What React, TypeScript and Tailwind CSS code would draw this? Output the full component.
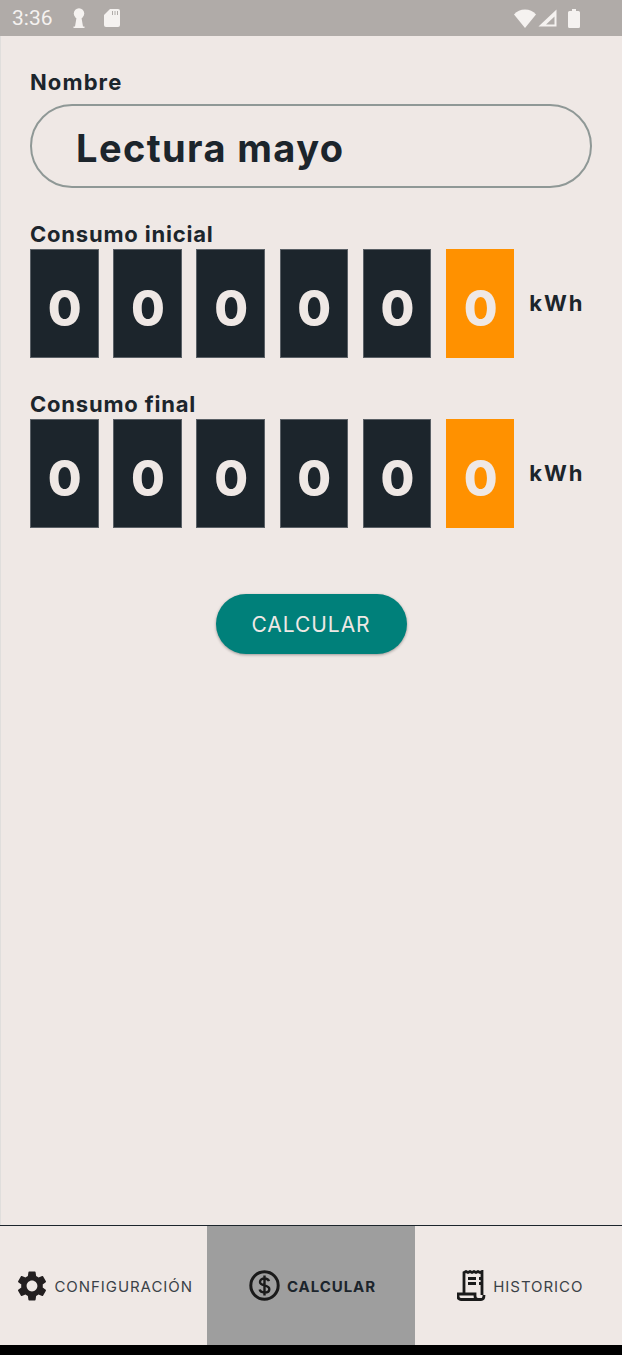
import { MdSettings } from 'react-icons/md'

const FONT = "font-['Inter','Liberation_Sans',sans-serif]"

function StatusBar() {
  return (
    <div className="h-9 bg-[#b0aba8] flex items-center pl-3 pr-[42px] text-[#f5f2f0]">
      <span className="font-['Roboto',sans-serif] text-[21px] leading-none w-[46px]">3:36</span>
      <svg className="ml-[14px]" width="14" height="20" viewBox="0 0 14 20" fill="#f5f2f0">
        <circle cx="7" cy="5.500" r="5.200" />
        <path d="M4.800 8h4.400l1.800 10.500h1.500V20H1.500v-1.500H3z" />
      </svg>
      <svg className="ml-[18px]" width="16" height="18" viewBox="0 0 16 18" fill="#f5f2f0">
        <path d="M6 0h8a2 2 0 0 1 2 2v14a2 2 0 0 1-2 2H2a2 2 0 0 1-2-2V6z" />
        <path d="M8 2h1v4H8zM10.500 2h1v4h-1zM13 2h1v4h-1z" fill="#b0aba8" />
      </svg>
      <div className="ml-auto flex items-center">
        <svg width="22" height="19" viewBox="0 0 22 19" fill="#f5f2f0">
          <path d="M0 5.500C3 2 6.500 0.500 11 0.500s8 1.500 11 5L11 19z" />
        </svg>
        <svg className="ml-[2px]" width="19" height="18" viewBox="0 0 19 18" fill="none">
          <path d="M0.500 17.500L18.500 0.500v17z" fill="#f5f2f0" />
          <path d="M8 15.500l8.500-8v8z" fill="#b0aba8" />
        </svg>
        <svg className="ml-[11px]" width="12" height="19" viewBox="0 0 12 19" fill="#f5f2f0">
          <path d="M4 0h4v2h2.500a1.500 1.500 0 0 1 1.500 1.500v14a1.500 1.500 0 0 1-1.500 1.500h-9A1.500 1.500 0 0 1 0 17.500v-14A1.500 1.500 0 0 1 1.500 2H4z" />
        </svg>
      </div>
    </div>
  )
}

function Meter({ label, className }: { label: string; className: string }) {
  return (
    <div className={className}>
      <div className="text-[22px] leading-[25px] pb-[2px] font-bold text-[#1c252c] tracking-[0.8px]">{label}</div>
      <div className="flex items-center gap-[14.700px]">
        {[0, 1, 2, 3, 4, 5].map(i => (
          <div
            key={i}
            className={`w-[68.500px] h-[109px] flex items-center justify-center ${
              i === 5 ? 'bg-[#ff9100]' : 'bg-[#1c252c] border-[0.5px] border-[#5a6066]'
            }`}>
            <span className="text-[49px] leading-none font-extrabold text-[#efe8e5] mt-[9px] ml-[1px]">0</span>
          </div>
        ))}
        <span className="text-[22px] font-bold text-[#1c252c] tracking-[2px]">kWh</span>
      </div>
    </div>
  )
}

function Tab({ label, active, children }: { label: string; active?: boolean; children: React.ReactNode }) {
  return (
    <div className={`flex-1 flex items-center justify-center gap-[7px] pl-[3px] ${active ? 'bg-[#9e9e9e]' : ''}`}>
      {children}
      <span className={`text-[15px] tracking-[0.950px] mt-[4px] ${active ? 'font-bold text-[#1c252c]' : 'font-normal text-[#3b4248]'}`}>
        {label}
      </span>
    </div>
  )
}

export default function App() {
  return (
    <div className={`w-[622px] h-[1355px] flex flex-col bg-black ${FONT}`}>
      <StatusBar />
      <div className="flex-1 bg-[#efe8e5] border-l border-[#e0dedc] px-[29px] pt-[33px] flex flex-col">
        <div className="text-[22px] leading-[27px] font-bold text-[#1c252c] tracking-[1.100px]">Nombre</div>
        <div className="mt-[8px] w-[562px] h-[84px] rounded-full border-2 border-[#8f9896] flex items-center pl-[44px] pt-[5px]">
          <span className="text-[38px] font-bold text-[#1c252c] tracking-[1.400px]">Lectura mayo</span>
        </div>
        <Meter label="Consumo inicial" className="mt-[34px]" />
        <Meter label="Consumo final" className="mt-[34px]" />
        <button className="mt-[66px] self-center ml-[-1px] w-[191px] h-[60px] pt-[1px] rounded-full bg-[#00807a] text-[#efe8e5] text-[21px] font-normal tracking-[0.950px] shadow-[0_1px_3px_rgba(0,0,0,0.35)]">
          CALCULAR
        </button>
      </div>
      <div className="h-[120px] bg-[#efe8e5] border-t border-[#1c252c] flex">
        <Tab label="CONFIGURACIÓN">
          <MdSettings size={36} color="#231f20" className="-mx-[3px]" />
        </Tab>
        <Tab label="CALCULAR" active>
          <svg width="31" height="31" viewBox="0 0 31 31" fill="none" stroke="#1a1a1a">
            <circle cx="15.500" cy="15.500" r="13.700" strokeWidth="3" />
            <path d="M20 11.200c-.6-1.800-2.300-2.700-4.500-2.700-2.500 0-4.500 1.300-4.500 3.400 0 4.600 9.300 2.500 9.300 7.300 0 2.100-2.200 3.300-4.800 3.300-2.400 0-4.300-1-4.900-3M15.500 5.500v20" strokeWidth="2.400" />
          </svg>
        </Tab>
        <Tab label="HISTORICO">
          <svg className="ml-[1px]" width="29" height="31" viewBox="0 0 29 31" fill="none" stroke="#1a1a1a" strokeWidth="2.800">
            <path d="M7 24V2.500l2 -1 2 1 2 -1 2 1 2 -1 2 1 2 -1 2 1 2 -1V25" />
            <path d="M27 25c0 3-1 4.500-3 4.500H4c-2 0-3-1-3-3.500v-2h17v2c0 2 1 3.500 3 3.500" />
            <path d="M11 8.500h8M11 13.500h8M22 8.500h3M22 13.500h3" />
          </svg>
        </Tab>
      </div>
      <div className="h-[10px] bg-black" />
    </div>
  )
}
